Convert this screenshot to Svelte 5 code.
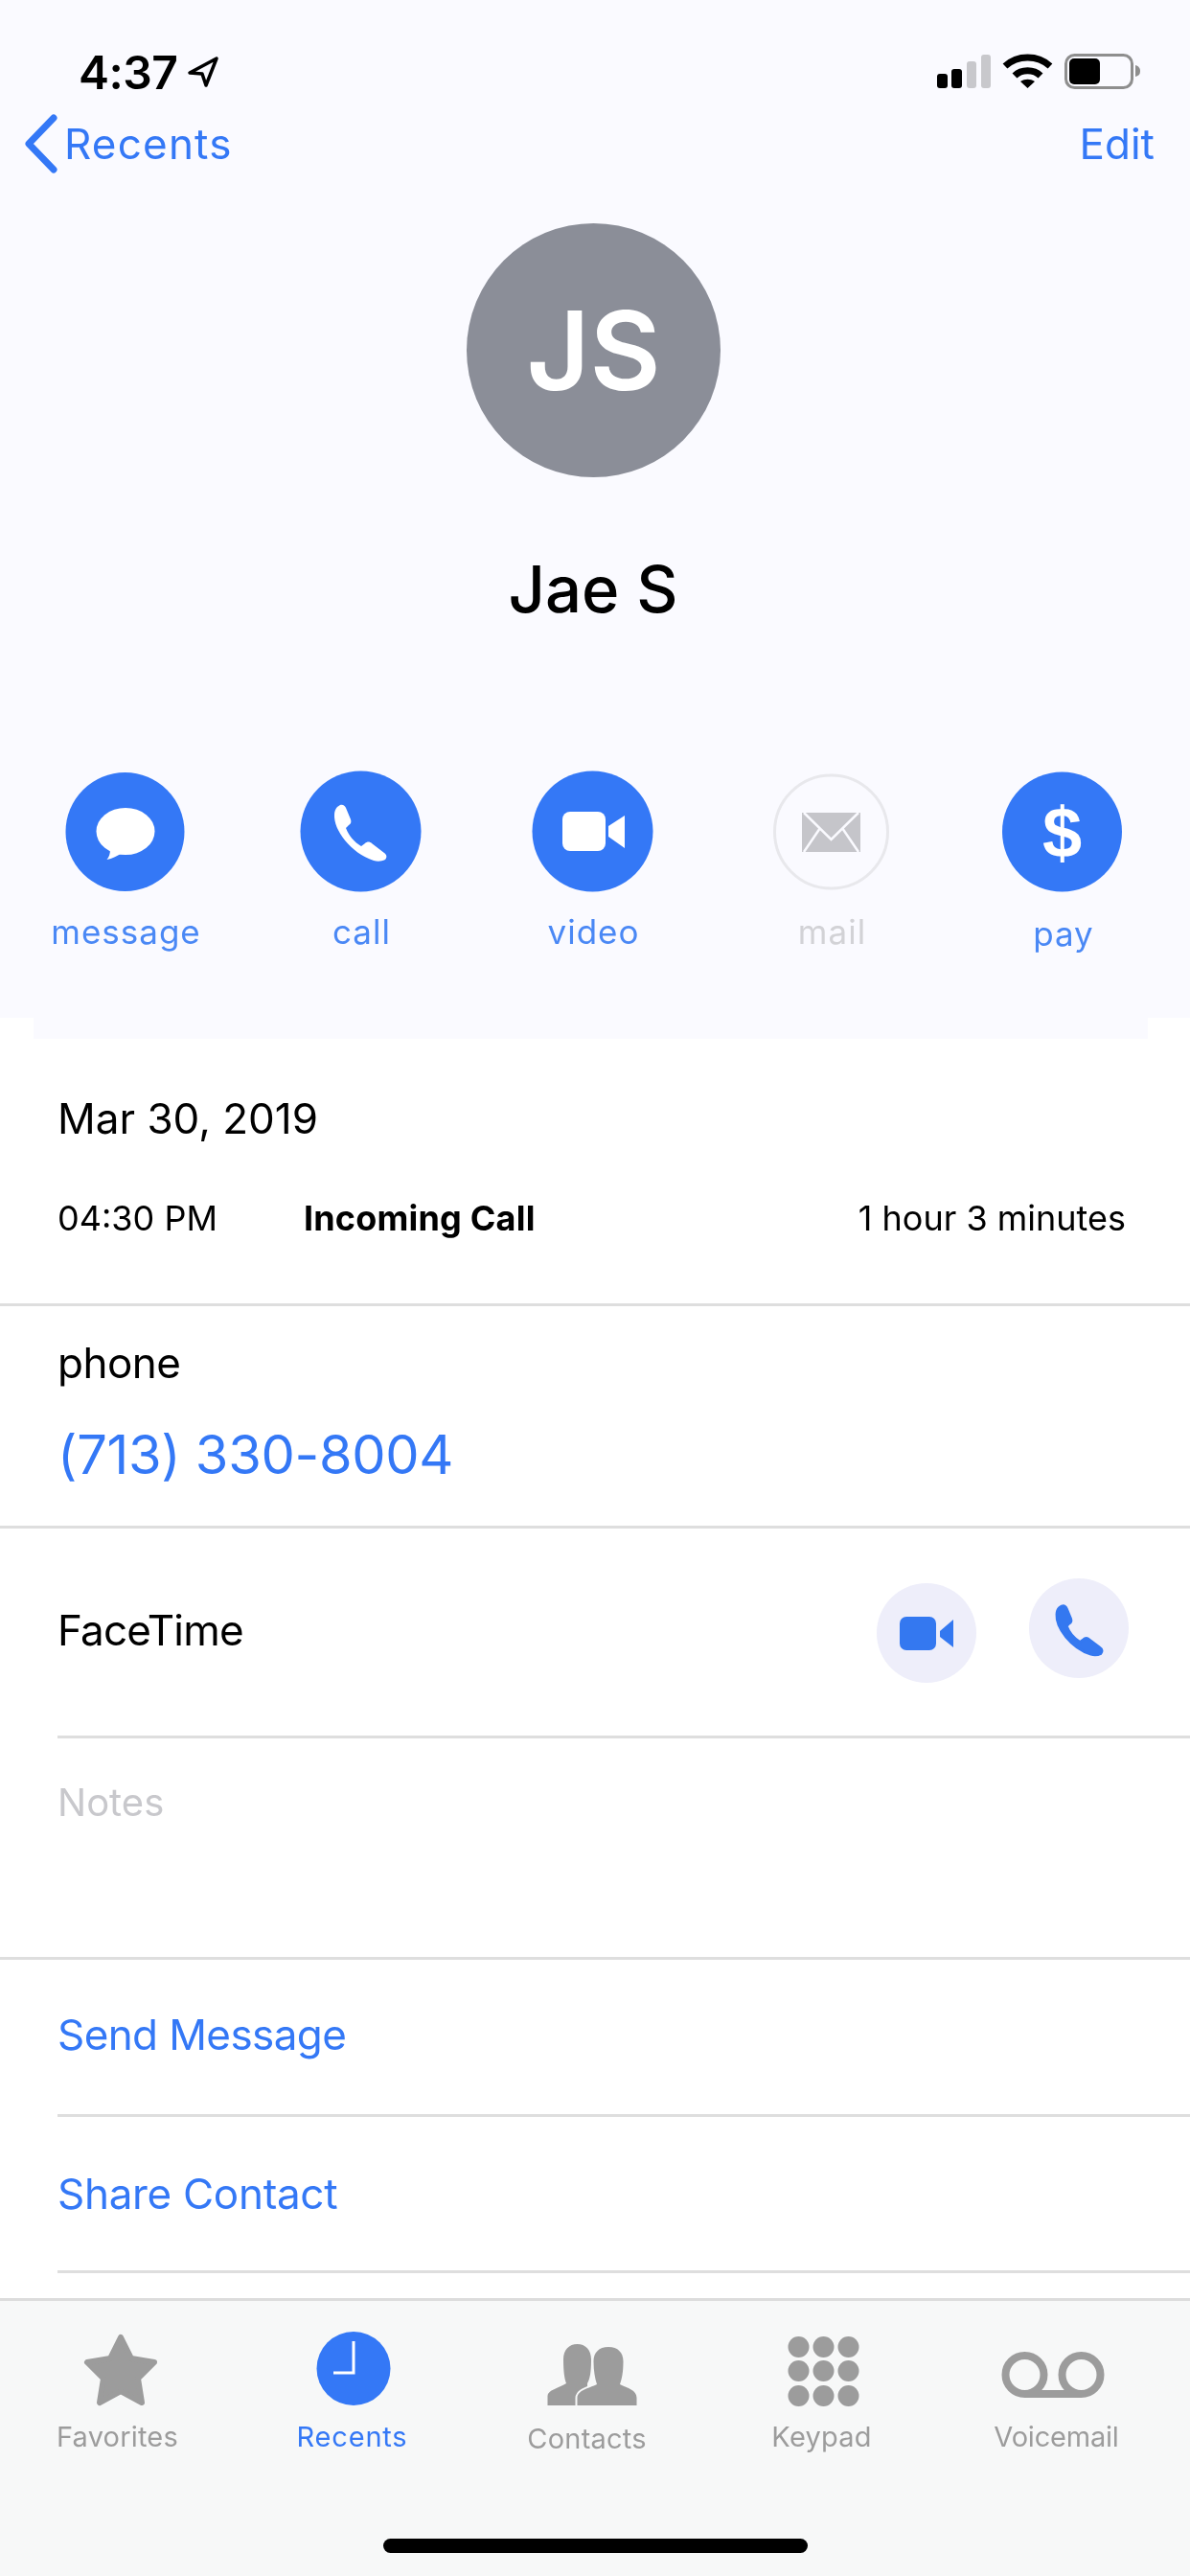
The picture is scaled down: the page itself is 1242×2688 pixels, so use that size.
<script lang="ts">
	const phone =
		'M4 3 L7 1 C10 0 12 2 13 4 L18 16 C19 19 18 21 16 22 L13 25 C16 33 22 40 29 44 L33 41 C35 39 38 39 40 41 L53 51 C56 53 56 56 54 58 C50 60 46 60 42 59 C18 51 0 27 1 11 C1 8 2 5 4 3 Z';
	const keys = [35.5, 61.5, 87.5].flatMap((x) => [17, 42, 68].map((y) => ({ x, y })));
</script>

<div class="app">
	<header class="head">
		<div class="status">
			<div class="clock">
				<span>4:37</span>
				<svg class="arrow" width="36" height="34" viewBox="0 0 36 34">
					<path d="M32 3 L4 18 L17 19 L21 31 Z" fill="none" stroke="#000" stroke-width="3.5" stroke-linejoin="round" />
				</svg>
			</div>
			<svg width="213" height="38" viewBox="0 0 213 38">
				<rect x="0" y="21" width="11" height="15" rx="3" fill="#000" />
				<rect x="15" y="16" width="11" height="20" rx="3" fill="#000" />
				<rect x="31" y="8" width="10" height="28" rx="3" fill="#c8c8cc" />
				<rect x="46" y="1" width="10" height="35" rx="3" fill="#c8c8cc" />
				<path d="M71 13 C84 1 105 1 118 13" fill="none" stroke="#000" stroke-width="7" />
				<path d="M81 23 C88 16 101 16 108 23" fill="none" stroke="#000" stroke-width="7" />
				<path d="M87 29 L94.5 36 L102 29 C97 26 92 26 87 29 Z" fill="#000" />
				<rect x="134.5" y="1.5" width="69" height="34" rx="9" fill="none" stroke="#8e8e8e" stroke-width="3" />
				<rect x="138" y="5" width="32" height="27" rx="5" fill="#000" />
				<path d="M207 12 C211 13 212 16 212 18 C212 21 211 23 207 24 Z" fill="#8e8e8e" />
			</svg>
		</div>

		<nav class="nav">
			<div class="back">
				<svg width="36" height="64" viewBox="0 0 36 64">
					<path d="M31 5 L5 32 L31 59" fill="none" stroke="#3478f6" stroke-width="7" stroke-linecap="round" stroke-linejoin="round" />
				</svg>
				<span class="recents">Recents</span>
			</div>
			<span>Edit</span>
		</nav>

		<div class="avatar">JS</div>
		<h1>Jae S</h1>

		<div class="actions">
			<div class="action">
				<svg width="127" height="127" viewBox="0 0 127 127">
					<circle cx="63.5" cy="64" r="62" fill="#3478f6" />
					<ellipse cx="64" cy="63.5" rx="30.5" ry="24.5" fill="#fff" />
					<path d="M48 82 C48 87 47 90 44.5 93 C50 92 56 89 60 86 Z" fill="#fff" />
				</svg>
				<span>message</span>
			</div>
			<div class="action">
				<svg width="127" height="127" viewBox="0 0 127 127">
					<circle cx="63.5" cy="63.5" r="63" fill="#3478f6" />
					<path d={phone} transform="translate(35 35)" fill="#fff" />
				</svg>
				<span>call</span>
			</div>
			<div class="action">
				<svg width="127" height="127" viewBox="0 0 127 127">
					<circle cx="63.5" cy="63.5" r="63" fill="#3478f6" />
					<rect x="32" y="43" width="45" height="41" rx="8" fill="#fff" />
					<path d="M80 58 L97 47 V81 L80 69 Z" fill="#fff" />
				</svg>
				<span>video</span>
			</div>
			<div class="action off">
				<svg width="127" height="127" viewBox="0 0 127 127">
					<circle cx="63.5" cy="64" r="59" fill="none" stroke="#e8e8ec" stroke-width="3" />
					<rect x="33" y="44" width="61" height="41" fill="#c5c5ca" />
					<path d="M35 44 L63.5 72 L92 44 M35 85 L52 60 M92 85 L75 60" fill="none" stroke="#fafaff" stroke-width="2.5" />
				</svg>
				<span>mail</span>
			</div>
			<div class="action">
				<svg width="127" height="127" viewBox="0 0 127 127">
					<circle cx="63.5" cy="64" r="62.5" fill="#3478f6" />
					<text x="63.5" y="90" text-anchor="middle" class="dollar">$</text>
				</svg>
				<span class="pay">pay</span>
			</div>
		</div>
	</header>
	<div class="head-tail"></div>

	<section class="call">
		<div class="date">Mar 30, 2019</div>
		<div class="call-row">
			<span class="time">04:30 PM</span>
			<b>Incoming Call</b>
			<span class="length">1 hour 3 minutes</span>
		</div>
	</section>

	<section class="phone">
		<div class="label">phone</div>
		<div class="number">(713) 330-8004</div>
	</section>

	<section class="facetime">
		<div class="label">FaceTime</div>
		<div class="ft-video">
			<svg width="104" height="104" viewBox="0 0 104 104">
				<circle cx="52" cy="52" r="52" fill="#eeeefa" />
				<rect x="24" y="35" width="38" height="35" rx="7" fill="#3478f0" />
				<path d="M66 50 L80 38 V67 L66 56 Z" fill="#3478f0" />
			</svg>
		</div>
		<svg width="104" height="104" viewBox="0 0 104 104">
			<circle cx="52" cy="52" r="52" fill="#eeeefa" />
			<path d={phone} transform="translate(28 28) scale(.87)" fill="#3478f0" stroke="#3478f0" stroke-width="3" stroke-linejoin="round" />
		</svg>
	</section>
	<div class="sep"></div>

	<section class="notes">Notes</section>

	<section class="link send">Send Message</section>
	<div class="sep"></div>
	<section class="link share">Share Contact</section>
	<div class="sep"></div>

	<footer class="tabs">
		<div class="tab">
			<svg width="120" height="80" viewBox="0 0 120 80">
				<path d="M63 7 L74 29 L98 33 L81 50 L85 75 L63 63 L41 75 L45 50 L28 33 L52 29 Z" fill="#9c9c9c" stroke="#9c9c9c" stroke-width="6" stroke-linejoin="round" />
			</svg>
			<span>Favorites</span>
		</div>
		<div class="tab active">
			<svg width="120" height="80" viewBox="0 0 120 80">
				<circle cx="61" cy="39.5" r="38.5" fill="#3478f6" />
				<path d="M61 11 V44 H40" fill="none" stroke="#fff" stroke-width="3" />
			</svg>
			<span>Recents</span>
		</div>
		<div class="tab low">
			<svg width="120" height="80" viewBox="0 0 120 80">
				<path d="M18.5 78 V68 C18.5 62 30 60 38 55 C36 50 35 42 35 30 C35 20 41 14 49.5 14 C58 14 64 20 64 30 C64 42 63 50 60 55 L60 78 Z" fill="#9c9c9c" />
				<path d="M49.5 78 V70 C50 62 62 60 70 56 C68 50 66.5 42 66.5 32 C66.5 23 72 17 82 17 C92 17 97.5 23 97.5 32 C97.5 44 96 50 94 56 C102 60 111.5 62 111.5 70 V78 Z" fill="#9c9c9c" stroke="#f7f8f8" stroke-width="4" paint-order="stroke" />
			</svg>
			<span>Contacts</span>
		</div>
		<div class="tab">
			<svg width="120" height="80" viewBox="0 0 120 80">
				{#each keys as k}
					<circle cx={k.x} cy={k.y} r="11" fill="#9c9c9c" />
				{/each}
			</svg>
			<span>Keypad</span>
		</div>
		<div class="tab tight">
			<svg width="120" height="80" viewBox="0 0 120 80">
				<circle cx="26.5" cy="46" r="20" fill="none" stroke="#9c9c9c" stroke-width="8" />
				<circle cx="85.5" cy="46" r="20" fill="none" stroke="#9c9c9c" stroke-width="8" />
				<path d="M26.5 66 H85.5" stroke="#9c9c9c" stroke-width="8" />
			</svg>
			<span>Voicemail</span>
		</div>
		<div class="home"></div>
	</footer>
</div>

<style>
	:global(body) {
		margin: 0;
	}

	.app {
		width: 1242px;
		height: 2688px;
		overflow: hidden;
		background: #fff;
		color: #000;
		font-family: Inter, 'Liberation Sans', sans-serif;
		font-size: 44px;
		filter: blur(0.5px);
	}

	.head {
		height: 1062px;
		background: #fafaff;
	}

	.head-tail {
		height: 22px;
		margin: 0 44px 0 35px;
		background: #fafaff;
	}

	.status {
		display: flex;
		justify-content: space-between;
		align-items: center;
		height: 70px;
		padding: 40px 51px 0 82px;
	}

	.clock {
		display: flex;
		align-items: center;
		gap: 9px;
		font-size: 48px;
		font-weight: 600;
		letter-spacing: -0.5px;
	}

	.nav {
		display: flex;
		justify-content: space-between;
		align-items: center;
		height: 80px;
		padding: 0 37px 0 25px;
		color: #3478f6;
	}

	.back {
		display: flex;
		align-items: center;
		gap: 6px;
	}

	.recents {
		letter-spacing: 1.2px;
	}

	.avatar {
		display: flex;
		justify-content: center;
		align-items: center;
		width: 265px;
		height: 265px;
		margin: 43px 0 0 487px;
		border-radius: 50%;
		background: #8b8e98;
		color: #fff;
		font-size: 114px;
		font-weight: 600;
	}

	h1 {
		margin: 77px 0 0;
		padding-right: 4px;
		font-size: 67px;
		font-weight: 500;
		line-height: 80px;
		text-align: center;
	}

	.actions {
		display: grid;
		grid-template-columns: 260px 232px 252px 246px 237px;
		margin-top: 149px;
	}

	.action {
		display: flex;
		flex-direction: column;
		align-items: center;
		color: #4a88f5;
		font-size: 35px;
		line-height: 50px;
		letter-spacing: 1px;
	}

	.action span {
		margin-top: 16px;
		padding-left: 3px;
	}

	.action .pay {
		margin-top: 18px;
	}

	.action.off {
		color: #d2d2d6;
	}

	.dollar {
		font-family: 'Liberation Sans', sans-serif;
		font-size: 74px;
		font-weight: 700;
		letter-spacing: 0;
		fill: #fff;
	}

	.call {
		height: 223px;
		padding-top: 53px;
		border-bottom: 3px solid #dedede;
	}

	.date {
		padding-left: 60px;
		line-height: 60px;
	}

	.call-row {
		display: flex;
		margin-top: 49px;
		padding: 0 67px 0 60px;
		font-size: 36px;
		line-height: 50px;
	}

	.call-row b {
		margin-left: 90px;
		font-weight: 700;
		letter-spacing: 0.2px;
	}

	.length {
		margin-left: auto;
	}

	.phone {
		height: 200px;
		padding-top: 29px;
		border-bottom: 3px solid #dedede;
	}

	.phone .label {
		padding-left: 60px;
		line-height: 60px;
		letter-spacing: -0.5px;
	}

	.number {
		margin-top: 31px;
		padding-left: 60px;
		color: #3478f6;
		font-size: 56px;
		line-height: 70px;
		letter-spacing: -0.3px;
	}

	.facetime {
		display: flex;
		align-items: flex-start;
		height: 164px;
		padding: 52px 64px 0 60px;
	}

	.facetime .label {
		margin: 2px auto 0 0;
		line-height: 104px;
		letter-spacing: -0.8px;
	}

	.ft-video {
		margin: 5px 55px 0 0;
	}

	.sep {
		height: 3px;
		margin-left: 60px;
		background: #dedede;
	}

	.notes {
		height: 191px;
		padding: 37px 0 0 60px;
		border-bottom: 3px solid #dedede;
		color: #c8c8cc;
		font-size: 40px;
		line-height: 60px;
	}

	.link {
		padding-left: 60px;
		color: #3478f6;
		line-height: 60px;
	}

	.send {
		height: 113px;
		padding-top: 48px;
		letter-spacing: -0.6px;
	}

	.share {
		height: 110px;
		padding-top: 50px;
		letter-spacing: -0.3px;
	}

	.tabs {
		position: relative;
		display: grid;
		grid-template-columns: repeat(5, 245px);
		height: 290px;
		margin-top: 26px;
		padding-top: 31px;
		border-top: 3px solid #dcdcdc;
		box-sizing: border-box;
		background: #f7f8f8;
		color: #9c9c9c;
		font-size: 29px;
		line-height: 40px;
		letter-spacing: 0.2px;
	}

	.tab {
		display: flex;
		flex-direction: column;
		align-items: center;
	}

	.tab span {
		margin-top: 11px;
	}

	.tab.low span {
		margin-top: 13px;
	}

	.tab.active {
		color: #3478f6;
		letter-spacing: 0.8px;
	}

	.tab.tight {
		letter-spacing: -0.2px;
	}

	.home {
		position: absolute;
		left: 400px;
		top: 248px;
		width: 443px;
		height: 15px;
		border-radius: 8px;
		background: #000;
	}
</style>
